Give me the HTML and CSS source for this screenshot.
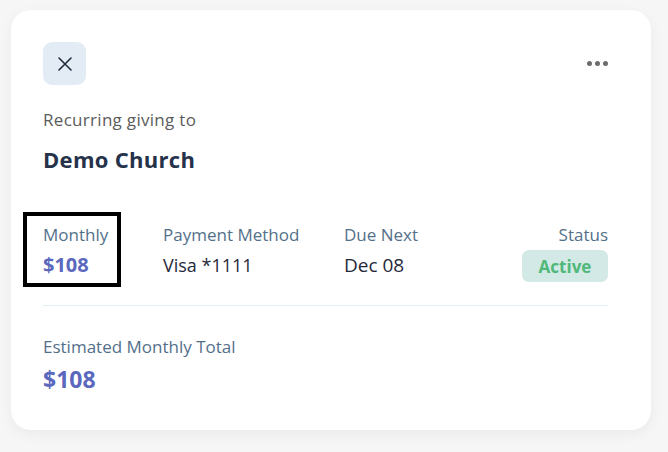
FILE: index.html
```html
<!DOCTYPE html>
<html>
<head>
<meta charset="utf-8">
<link rel="stylesheet" href="styles.css">
</head>
<body>
<div class="card">
  <div class="top">
    <button class="close" aria-label="Close">
      <svg width="14" height="14" viewBox="0 0 14 14"><path d="M1 1L13 13M13 1L1 13" stroke="#1f2a3a" stroke-width="1.6" stroke-linecap="round"/></svg>
    </button>
    <div class="dots"><span></span><span></span><span></span></div>
  </div>
  <div class="sub">Recurring giving to</div>
  <div class="title">Demo Church</div>
  <div class="row">
    <div class="col col-monthly">
      <div class="label">Monthly</div>
      <div class="amount">$108</div>
      <div class="highlight"></div>
    </div>
    <div class="col col-pay">
      <div class="label">Payment Method</div>
      <div class="value">Visa *1111</div>
    </div>
    <div class="col col-due">
      <div class="label">Due Next</div>
      <div class="value">Dec 08</div>
    </div>
    <div class="col col-status">
      <div class="label">Status</div>
      <div class="badge">Active</div>
    </div>
  </div>
  <div class="divider"></div>
  <div class="label">Estimated Monthly Total</div>
  <div class="total">$108</div>
</div>
</body>
</html>
```
FILE: styles.css
```css
* { box-sizing: border-box; }
html, body { margin: 0; padding: 0; }
body {
  background: #f6f6f6;
  font-family: "Open Sans", "Lato", sans-serif;
  width: 668px;
  height: 452px;
  padding: 10px 17px 0 11px;
}
.card {
  background: #fff;
  border-radius: 20px;
  box-shadow: 0 4px 14px rgba(0,0,0,0.05);
  height: 420px;
  padding: 32px 43px 0 32px;
}
.top {
  display: flex;
  justify-content: space-between;
  align-items: center;
  height: 43px;
}
.close {
  width: 43px; height: 43px;
  border: none; border-radius: 9px;
  background: #e3ecf5;
  display: flex; align-items: center; justify-content: center;
  padding: 0;
}
.dots { display: flex; gap: 3px; margin-right: 0; }
.dots span { width: 5px; height: 5px; border-radius: 50%; background: #6b6b6b; display: block; }
.sub {
  margin-top: 25px;
  font-size: 17px;
  letter-spacing: 0.3px;
  color: #5c5c5c;
  line-height: 20px;
}
.title {
  margin-top: 16px;
  font-size: 22px;
  letter-spacing: 0.3px;
  font-weight: 700;
  color: #25324a;
  line-height: 26px;
}
.row {
  display: flex;
  margin-top: 53px;
  height: 80px;
}
.col { position: relative; }
.col-monthly { width: 120px; }
.col-pay { width: 181px; }
.col-due { flex: 1; }
.col-status { display: flex; flex-direction: column; align-items: flex-end; }
.label {
  font-size: 17px;
  color: #53708a;
  line-height: 20px;
}
.value {
  margin-top: 9px;
  font-size: 19px;
  color: #1f2a3a;
  line-height: 22px;
}
.col-pay .value { font-size: 18px; }
.amount {
  margin-top: 9px;
  font-size: 20px;
  font-weight: 700;
  color: #5b68bd;
  line-height: 22px;
}
.highlight {
  position: absolute;
  left: -20px; top: -13px;
  width: 98px; height: 75px;
  border: 4px solid #000;
}
.badge {
  margin-top: 5px;
  width: 86px; height: 32px;
  border-radius: 7px;
  background: #d3e9e5;
  color: #4fb87a;
  font-weight: 700;
  font-size: 17px;
  display: flex; align-items: center; justify-content: center;
}
.divider {
  height: 1px;
  background: #e2eef5;
  margin-bottom: 31px;
}
.total {
  margin-top: 9px;
  font-size: 23px;
  font-weight: 700;
  color: #5b68bd;
  line-height: 26px;
}
```
